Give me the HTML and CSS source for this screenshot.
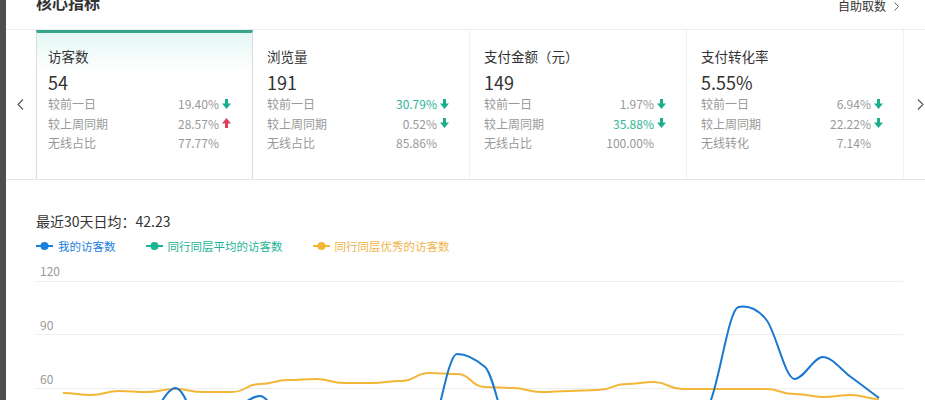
FILE: index.html
```html
<!DOCTYPE html>
<html lang="zh-CN">
<head>
<meta charset="utf-8">
<title>核心指标</title>
<link rel="stylesheet" href="styles.css">
</head>
<body>
<div class="page">
  <div class="strip"></div>
  <div class="main">
    <div class="header">
      <h2 class="title">核心指标</h2>
      <a class="more">自助取数<svg class="more-chev" width="5" height="9" viewBox="0 0 5 9"><polyline points="0.5,0.5 4.5,4.5 0.5,8.5" fill="none" stroke="#666" stroke-width="1"/></svg></a>
    </div>

    <div class="cards-row">
      <div class="nav nav-left">
        <svg width="7" height="11" viewBox="0 0 7 11"><polyline points="6,0.5 1,5.5 6,10.5" fill="none" stroke="#555" stroke-width="1.1"/></svg>
      </div>
      <div class="cards">
        <div class="card active">
          <div class="card-title">访客数</div>
          <div class="card-value">54</div>
          <div class="row"><span class="label">较前一日</span><span class="val">19.40%</span><span class="arrow"><svg width="9" height="10" viewBox="0 0 9 10"><rect x="3" y="0" width="3" height="5" fill="#1aaf8b"/><polygon points="0,4.5 9,4.5 4.5,10" fill="#1aaf8b"/></svg></span></div>
          <div class="row"><span class="label">较上周同期</span><span class="val">28.57%</span><span class="arrow"><svg width="9" height="10" viewBox="0 0 9 10"><polygon points="0,5.5 9,5.5 4.5,0" fill="#d9415b"/><rect x="3" y="5" width="3" height="5" fill="#d9415b"/></svg></span></div>
          <div class="row"><span class="label">无线占比</span><span class="val">77.77%</span><span class="arrow"></span></div>
        </div>
        <div class="card">
          <div class="card-title">浏览量</div>
          <div class="card-value">191</div>
          <div class="row"><span class="label">较前一日</span><span class="val val-green">30.79%</span><span class="arrow"><svg width="9" height="10" viewBox="0 0 9 10"><rect x="3" y="0" width="3" height="5" fill="#1aaf8b"/><polygon points="0,4.5 9,4.5 4.5,10" fill="#1aaf8b"/></svg></span></div>
          <div class="row"><span class="label">较上周同期</span><span class="val">0.52%</span><span class="arrow"><svg width="9" height="10" viewBox="0 0 9 10"><rect x="3" y="0" width="3" height="5" fill="#1aaf8b"/><polygon points="0,4.5 9,4.5 4.5,10" fill="#1aaf8b"/></svg></span></div>
          <div class="row"><span class="label">无线占比</span><span class="val">85.86%</span><span class="arrow"></span></div>
        </div>
        <div class="card">
          <div class="card-title">支付金额（元）</div>
          <div class="card-value">149</div>
          <div class="row"><span class="label">较前一日</span><span class="val">1.97%</span><span class="arrow"><svg width="9" height="10" viewBox="0 0 9 10"><rect x="3" y="0" width="3" height="5" fill="#1aaf8b"/><polygon points="0,4.5 9,4.5 4.5,10" fill="#1aaf8b"/></svg></span></div>
          <div class="row"><span class="label">较上周同期</span><span class="val val-green">35.88%</span><span class="arrow"><svg width="9" height="10" viewBox="0 0 9 10"><rect x="3" y="0" width="3" height="5" fill="#1aaf8b"/><polygon points="0,4.5 9,4.5 4.5,10" fill="#1aaf8b"/></svg></span></div>
          <div class="row"><span class="label">无线占比</span><span class="val">100.00%</span><span class="arrow"></span></div>
        </div>
        <div class="card">
          <div class="card-title">支付转化率</div>
          <div class="card-value">5.55%</div>
          <div class="row"><span class="label">较前一日</span><span class="val">6.94%</span><span class="arrow"><svg width="9" height="10" viewBox="0 0 9 10"><rect x="3" y="0" width="3" height="5" fill="#1aaf8b"/><polygon points="0,4.5 9,4.5 4.5,10" fill="#1aaf8b"/></svg></span></div>
          <div class="row"><span class="label">较上周同期</span><span class="val">22.22%</span><span class="arrow"><svg width="9" height="10" viewBox="0 0 9 10"><rect x="3" y="0" width="3" height="5" fill="#1aaf8b"/><polygon points="0,4.5 9,4.5 4.5,10" fill="#1aaf8b"/></svg></span></div>
          <div class="row"><span class="label">无线转化</span><span class="val">7.14%</span><span class="arrow"></span></div>
        </div>
      </div>
      <div class="nav nav-right">
        <svg width="7" height="11" viewBox="0 0 7 11"><polyline points="1,0.5 6,5.5 1,10.5" fill="none" stroke="#555" stroke-width="1.1"/></svg>
      </div>
    </div>

    <div class="trend">
      <div class="avg">最近30天日均：42.23</div>
      <div class="legend">
        <span class="legend-item blue"><svg width="17" height="10" viewBox="0 0 17 10"><line x1="0" y1="5" x2="17" y2="5" stroke="#1a7fdc" stroke-width="2"/><circle cx="8.5" cy="5" r="4" fill="#1a7fdc"/></svg>我的访客数</span>
        <span class="legend-item green"><svg width="17" height="10" viewBox="0 0 17 10"><line x1="0" y1="5" x2="17" y2="5" stroke="#1bb494" stroke-width="2"/><circle cx="8.5" cy="5" r="4" fill="#1bb494"/></svg>同行同层平均的访客数</span>
        <span class="legend-item orange"><svg width="17" height="10" viewBox="0 0 17 10"><line x1="0" y1="5" x2="17" y2="5" stroke="#f3b630" stroke-width="2"/><circle cx="8.5" cy="5" r="4" fill="#f3b630"/></svg>同行同层优秀的访客数</span>
      </div>
      <svg class="chart" width="919" height="144" viewBox="6 256 919 144">
        <g stroke="#eeeeee" stroke-width="1">
          <line x1="36" y1="281.5" x2="903" y2="281.5"/>
          <line x1="36" y1="334.5" x2="903" y2="334.5"/>
          <line x1="36" y1="388.5" x2="903" y2="388.5"/>
        </g>
        <g class="axis-label">
          <text x="40" y="276">120</text>
          <text x="40" y="330">90</text>
          <text x="40" y="384">60</text>
        </g>
        <path fill="none" stroke="#f2b739" stroke-width="2" d="M63,393 C77,393 77,395 91,395 S105,391 119,391 S133,392 147,392 S161,389 175,389 S189,392 204,392 S218,392 232,392 S246,384 260,384 S274,380 288,380 S302,379 316,379 S330,383 344,383 S358,383 372,383 S386,381 401,381 S415,373 429,373 S443,374 457,374 S471,387 485,387 S499,388 513,388 S527,392 541,392 S555,391 569,391 S583,390 598,390 S612,384 626,384 S640,382 654,382 S668,389 682,389 S696,389 710,389 S724,389 738,389 S752,389 766,389 S780,394 795,394 S809,397 823,397 S837,395 851,395 S865,399 879,399"/>
        <path fill="none" stroke="#1a78cf" stroke-width="2" d="M63,440 C77,440 77,432 91,432 S105,425 119,425 S133,420 147.4,420 C156.8,413.8 166.2,388 175.6,388 C185,388 194.3,426 203.7,430 C213.1,434 222.4,417.7 231.8,412 C241.2,406.3 250.6,396 260,396 C269.4,396 278.7,422.7 288.1,430 S302,440 316,440 S330,442 344,442 S358,442 372,442 S386,440 401,440 S415,440 428.8,440 C438.2,425.7 447.6,354 457,354 C466.4,354 475.7,359 485.1,367 C494.5,375 503.8,437 513.2,440 S527,445 541,445 S555,445 569,445 S583,445 598,445 S612,445 626,445 S640,445 654,445 S668,440 682.1,440 C691.5,432.8 700.8,424.2 710.2,402 C719.6,379.8 729,309 738.4,307 C747.8,305 757.1,308 766.5,320 C775.9,332 785.2,379 794.6,379 C804,379 813.4,357 822.8,357 C832.2,357 841.5,370.2 850.9,377 C860.3,383.8 869.6,391 879,398"/>
      </svg>
    </div>
  </div>
</div>
</body>
</html>
```

FILE: styles.css
```css
* { box-sizing: border-box; }
html, body { margin: 0; padding: 0; background: #fff; }
body {
  font-family: "Noto Sans CJK SC", "Noto Sans", sans-serif;
  color: #333;
  overflow: hidden;
  height: 400px;
}
.page { display: flex; height: 400px; }
.strip { width: 6px; flex: none; background: #4e4e4e; }
.main { flex: 1; min-width: 0; }

.header {
  height: 30px;
  border-bottom: 1px solid #ececec;
  display: flex;
  justify-content: space-between;
  align-items: flex-start;
  padding: 0 26px 0 30px;
}
.title {
  margin: -6px 0 0 0;
  font-size: 16px;
  line-height: 16px;
  font-weight: 700;
  color: #333;
}
.more {
  margin-top: 0;
  font-size: 12px;
  line-height: 12px;
  color: #333;
  display: flex;
  align-items: center;
  gap: 8px;
}
.more-chev { display: block; }

.cards-row {
  display: flex;
  height: 150px;
  border-bottom: 1px solid #e6e6e6;
}
.nav { display: flex; align-items: center; flex: none; }
.nav svg { display: block; }
.nav-left { width: 30px; padding-left: 11px; }
.nav-right { flex: 1; padding-left: 13px; }

.cards {
  display: grid;
  grid-template-columns: repeat(4, 217px);
}
.card {
  border-right: 1px solid #f1f1f1;
  padding: 17px 20px 0 14px;
}
.card.active {
  border-left: 1px solid #dcdcdc;
  border-right: 1px solid #dcdcdc;
  border-top: 3px solid #33a88d;
  padding: 14px 21px 0 11px;
  background: linear-gradient(to bottom, #e3f7f4 0px, #ffffff 38px);
}
.card-title { font-size: 13.5px; line-height: 18px; color: #333; }
.card-value { font-size: 18px; line-height: 24px; margin-top: 5px; color: #333; }
.row {
  display: flex;
  align-items: center;
  font-size: 12px;
  line-height: 19.5px;
  color: #999;
}
.row:first-of-type { margin-top: 1px; }
.label { flex: none; }
.val { flex: 1; text-align: right; }
.val-green { color: #2db596; }
.arrow { flex: none; width: 9px; height: 10px; margin-left: 3px; }
.arrow svg { display: block; }

.avg {
  margin-top: 32px;
  padding-left: 30px;
  font-size: 14px;
  line-height: 18px;
  color: #333;
}
.legend {
  margin-top: 8px;
  padding-left: 30px;
  display: flex;
  gap: 30px;
  font-size: 11.5px;
  line-height: 16px;
}
.legend-item { display: flex; align-items: center; gap: 5px; }
.legend-item svg { display: block; }
.legend-item.blue { color: #1a7fdc; }
.legend-item.green { color: #1bb494; }
.legend-item.orange { color: #efb54a; }

.chart { display: block; margin-top: 2px; }
.axis-label text {
  font-family: "Noto Sans CJK SC", "Noto Sans", sans-serif;
  font-size: 12px;
  fill: #9a9a9a;
}
```
